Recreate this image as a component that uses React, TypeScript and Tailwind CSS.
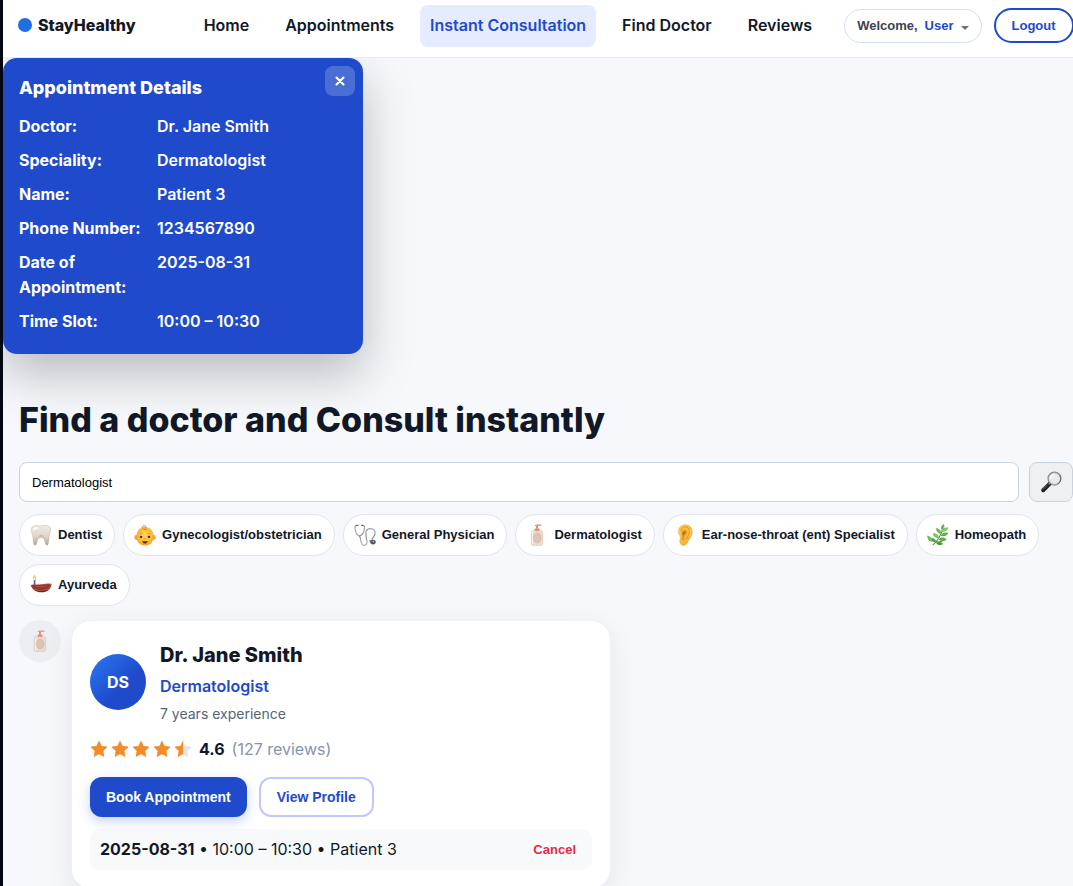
import React, { useState } from "react";

const controlFont = "font-['Liberation_Sans',Arial,sans-serif]";

function ToothIcon() {
  return (
    <svg viewBox="0 0 24 24" className="size-[22px]" aria-hidden="true">
      <defs>
        <linearGradient id="tooth" x1="0" y1="0" x2="0" y2="1">
          <stop offset="0" stopColor="#f1ebe1" />
          <stop offset="0.55" stopColor="#dfd6c9" />
          <stop offset="1" stopColor="#b3a18b" />
        </linearGradient>
      </defs>
      <path
        d="M2 3.600C3.400 1.500 6 1.800 7.600 1.700c1.600-.1 2.800.6 4.400.6s2.800-.7 4.400-.6c1.600.1 4.200-.2 5.600 1.900 1.200 2.300.3 5.300-.6 7.400-.8 1.900-.5 4.200-.9 7-.4 2.900-.7 5.200-1.900 5.200-1.400 0-2-2.200-2.500-4.600-.5-2.300-1.600-3.900-4.100-3.900s-3.600 1.600-4.100 3.900c-.5 2.400-1.100 4.600-2.500 4.600-1.200 0-1.500-2.300-1.900-5.200-.3-2.800-.1-5.100-.9-7C1.700 8.900.8 5.900 2 3.600z"
        fill="url(#tooth)"
        stroke="#b8ad9d"
        strokeWidth="0.500"
      />
      <path d="M8.300 15.800c.2-2.400 1.700-4 3.700-4s3.500 1.600 3.700 4c-.9-1.200-2.200-1.700-3.700-1.700s-2.800.5-3.700 1.700z" fill="#bfb09b" opacity="0.600" />
      <path d="M4.200 4.300c1.800-1.100 4-.6 5 .2-1.500.1-3.800.5-4.600 3.200-.8-.9-1-2.300-.4-3.400z" fill="#fffdf8" opacity="0.900" />
    </svg>
  );
}

function BabyIcon() {
  return (
    <svg viewBox="0 0 24 24" className="size-[22px]" aria-hidden="true">
      <defs>
        <radialGradient id="baby" cx="0.5" cy="0.45" r="0.6">
          <stop offset="0" stopColor="#ffd65c" />
          <stop offset="0.7" stopColor="#fbb935" />
          <stop offset="1" stopColor="#ed951c" />
        </radialGradient>
      </defs>
      <ellipse cx="2.700" cy="14.500" rx="2.300" ry="2.900" fill="#f3a42a" />
      <ellipse cx="21.300" cy="14.500" rx="2.300" ry="2.900" fill="#f3a42a" />
      <path d="M12 3.200c5.600 0 9.200 4.100 9.200 10.300 0 6.200-4.200 10-9.200 10s-9.200-3.800-9.200-10C2.800 7.300 6.400 3.200 12 3.200z" fill="url(#baby)" />
      <path d="M13.700 6c-2.700.6-5-.7-4.600-2.500.3-1.600 2.500-2.200 3.600-1 .8.900.3 2.100-.8 1.900" stroke="#cf8321" strokeWidth="1" fill="none" strokeLinecap="round" />
      <path d="M6.200 10.800c.7-.7 1.700-.9 2.700-.5M15.100 10.300c1-.4 2-.2 2.700.5" stroke="#d28a2a" strokeWidth="0.800" fill="none" strokeLinecap="round" />
      <circle cx="7.700" cy="14" r="1.300" fill="#34251b" />
      <circle cx="16.300" cy="14" r="1.300" fill="#34251b" />
      <path d="M11.200 16c.5.400 1.100.4 1.600 0" stroke="#d17a14" strokeWidth="0.800" fill="none" strokeLinecap="round" />
      <path d="M9 18.500c2 .5 4 .5 6 0-.4 2.100-1.600 2.900-3 2.900s-2.600-.8-3-2.900z" fill="#6d2719" />
    </svg>
  );
}

function StethoscopeIcon() {
  return (
    <svg viewBox="0 0 24 24" className="size-[22px]" aria-hidden="true" fill="none" strokeLinecap="round">
      <path d="M3.300 1.500C1.200 1.700.8 2.700 1.100 4.500c.5 3.500 1.400 7.500 4.400 8.500 3.200-.7 5.500-4.700 6-8.300.3-1.900-.3-3-2.300-3.200" stroke="#94979a" strokeWidth="1.300" />
      <path d="M1.500 4.500c.6 3.200 1.500 6.800 4.100 8 2.800-1 5-4.500 5.500-8" stroke="#eff0f1" strokeWidth="0.500" />
      <path d="M6 13c.8 1.400.9 2 1.200 4.200.5 3.200 1.500 6 3.800 6 2.500 0 3.200-2.300 3-5-.2-2.800-1.400-5.500-1-8.700.3-2.700 2.200-4.500 5-4.500 3.500 0 5.300 2.500 4.900 5.500-.3 2.600-2.500 4-3 6-.2 1 0 1.600.3 2.300" stroke="#909397" strokeWidth="1.300" />
      <path d="M7.300 17.200c.5 3 1.300 5.700 3.600 5.800 2.300 0 3-2.300 2.800-4.800M13.300 9.500c.4-2.300 2.200-4.100 4.700-4.100 3 0 4.800 2.300 4.500 4.900" stroke="#eceef0" strokeWidth="0.500" />
      <path d="M3 1.500h1.200M8.500 1.500h1" stroke="#65686c" strokeWidth="1.300" />
      <ellipse cx="20.700" cy="19.700" rx="3" ry="2.600" fill="#55585c" />
      <circle cx="21" cy="19" r="1" fill="#a5a8ad" />
      <path d="M17.500 18.500l1.800 1" stroke="#606367" strokeWidth="1.500" />
    </svg>
  );
}

function LotionIcon() {
  return (
    <svg viewBox="0 0 24 24" className="size-[22px]" aria-hidden="true">
      <rect x="5.700" y="7" width="12.600" height="16.500" rx="2.700" fill="#ecdccc" stroke="#d5bfae" strokeWidth="0.600" />
      <path d="M7.200 9v12.500" stroke="#fbf4ec" strokeWidth="1.100" strokeLinecap="round" />
      <ellipse cx="12.200" cy="15.200" rx="4.300" ry="5.600" fill="#dcc3b8" stroke="#cfb2a7" strokeWidth="0.500" />
      <rect x="9.400" y="4.800" width="5.300" height="2.600" rx="0.800" fill="#ee8068" />
      <path d="M12 5V2.200" stroke="#e9806a" strokeWidth="2" />
      <path d="M9.800 1.100c2-.7 5-.7 7-.2.500.2.400 1-.1 1.100-2 .3-5 .4-6.500.2-.6 0-.9-.9-.4-1.100z" fill="#f4917a" />
    </svg>
  );
}

function EarIcon() {
  return (
    <svg viewBox="0 0 24 24" className="size-[22px]" aria-hidden="true">
      <defs>
        <linearGradient id="ear" x1="0" y1="0" x2="1" y2="1">
          <stop offset="0" stopColor="#ffd04d" />
          <stop offset="1" stopColor="#f3a62b" />
        </linearGradient>
      </defs>
      <path d="M4.800 9.300C4.300 4.400 7.300 1.200 12 .9c4.800-.3 8.100 3.200 8 8.100-.1 3.700-2.200 5.900-3.600 8.300-1.300 2.300-2.400 5.900-5.500 6.100-3.200.2-4.900-2.500-4.600-5.200.2-1.700 1-2.500.7-4.200-.3-1.500-1.900-2.400-2.200-4.700z" fill="url(#ear)" stroke="#e6992c" strokeWidth="0.400" />
      <path d="M7.300 7.200C8 4.300 10 3 12.500 3.100c3.500.2 5.100 3.300 4.600 6.300-.5 2.800-2.500 4.300-3.500 6.500" fill="none" stroke="#dc901f" strokeWidth="1" strokeLinecap="round" />
      <path d="M8.500 8.700c.9-2.500 3.500-3.300 5-1.900 1.600 1.600.7 4.300-1.100 5.400-1.300.8-1.200 2-.8 3.300.4 1.700-1.100 2.900-2.600 2-1.500-1-.3-2.700-.3-4.300 0-1.700-1-2.900-.2-4.500z" fill="#e39a2b" />
      <path d="M9.800 8.900c.8-1.300 2.200-1.300 2.800-.4.500 1-.5 2.100-1.600 2.800-.9.600-.9 1.700-.8 2.700-1.200-1.600-1.300-3.500-.4-5.100z" fill="#b9701a" />
      <path d="M17.900 6.300c.9 3 .1 5.500-1.300 7.800" stroke="#ffe07a" strokeWidth="0.900" fill="none" strokeLinecap="round" />
    </svg>
  );
}

function HerbIcon() {
  return (
    <svg viewBox="0 0 24 24" className="size-[22px]" aria-hidden="true">
      <path d="M6.500 22.700C11 19 14.500 13.500 17.200 5.500M9.300 20c3.500 0 6-.4 8.500-2" stroke="#4d8d38" strokeWidth="1.100" fill="none" strokeLinecap="round" />
      <g fill="#5fb243">
        <path d="M16.300 6.900c-2-3.100-.8-5.400 2.100-6.700 1.200 2.600.6 5.200-2.100 6.700z" />
        <path d="M16.300 8.200c1-3.300 3.300-5 6.900-4.300-.7 3.200-3.200 5-6.900 4.300z" fill="#74c456" />
        <path d="M15.500 10.900c-3.700-.6-5.700-3-5.500-6.500 3.400.5 5.700 2.800 5.500 6.500z" />
        <path d="M14.900 12.600c1.900-3.200 4.700-4.200 8.300-2.700-1.700 3.200-4.900 4.300-8.300 2.700z" fill="#4fa138" />
        <path d="M13.400 15.600c-3.900.2-6.400-2-7.100-5.600 3.900-.2 6.700 1.900 7.100 5.600z" fill="#74c456" />
        <path d="M12.500 16.600c2.500-2.300 5.900-2.400 9 .2-2.700 2.500-6.200 2.400-9-.2z" />
        <path d="M10.200 19.500c-3.400.9-6.100-.8-6.800-4.100 3.400-.6 6.200 1 6.800 4.100z" fill="#4fa138" />
        <path d="M5.700 19.300C2.200 19.200.4 16.400.3 12.500c3.800.9 5.800 3.400 5.400 6.800z" fill="#67b84b" />
        <path d="M10 20.600c2.700-1.500 5.500-1 7.500 1.300-2.600 1.700-5.600 1.400-7.500-1.300z" fill="#469b34" />
      </g>
      <path d="M18.300 2.400l-1.300 3.900M21 5.400L17.500 7.300M11.800 6l3.300 3.700M20.900 10.500l-5 1.500M8.300 11.300l4.500 3.300M1.900 14l3.200 4.300" stroke="#b5df94" strokeWidth="0.500" />
    </svg>
  );
}

function LampIcon() {
  return (
    <svg viewBox="0 0 24 24" className="size-[22px]" aria-hidden="true">
      <defs>
        <linearGradient id="bowl" x1="0" y1="0" x2="0" y2="1">
          <stop offset="0" stopColor="#c4584a" />
          <stop offset="1" stopColor="#6e1e1c" />
        </linearGradient>
      </defs>
      <path d="M.5 12.300c3.200-1.300 7.200-.6 11.500-1 5.300-.5 8.600-1.300 11.500-.5-.3 5.400-4.300 9.200-11.200 9.200C6.500 20 2.800 17.300.5 12.300z" fill="url(#bowl)" />
      <path d="M2 12.500c3.200-.9 6.400-.2 10.200-.4 4.200-.2 7.700-1 10-.4-1.700 2.300-5.300 3.600-9.900 3.600-4.900 0-7.900-.6-10.300-2.800z" fill="#84302a" />
      <path d="M5 13.600c3.200-.7 9.500-.1 15.300-1.200-2.300 1.500-5.200 2.100-8 2.100-3.100 0-5.200 0-7.300-.9z" fill="#aa5045" />
      <path d="M3.700 16.500c4.500 2 12.500 1.700 17-.8" stroke="#d67b66" strokeWidth="0.600" fill="none" />
      <path d="M5 13V6.500" stroke="#4865a8" strokeWidth="1.800" />
      <path d="M4.900.8C6.500 2.900 7 4.500 6.400 6 5.800 7.200 4.100 7.200 3.500 6 3 4.500 3.500 2.900 4.900.8z" fill="#ffc14d" />
      <path d="M5 3.500c.8 1.100.9 1.900.5 2.700-.3.500-.9.500-1.200 0-.3-.8 0-1.600.7-2.700z" fill="#fff7b6" />
    </svg>
  );
}

function MagnifierIcon() {
  return (
    <svg viewBox="0 0 24 24" className="size-[22px]" aria-hidden="true">
      <path d="M11 13.500L3.500 21" stroke="#202326" strokeWidth="4.300" strokeLinecap="round" />
      <path d="M7.900 15.300l-4.500 4.500" stroke="#6e747a" strokeWidth="0.900" strokeLinecap="round" />
      <path d="M12.200 12L9.500 14.700" stroke="#777c82" strokeWidth="2" />
      <circle cx="15.800" cy="8.300" r="6.900" fill="#e8ebed" stroke="#85898e" strokeWidth="1.600" />
      <circle cx="15.800" cy="8.300" r="6" fill="none" stroke="#d9dde0" strokeWidth="0.700" />
      <path d="M11.700 7.500c.4-2 2-3.300 4-3.400" stroke="#fff" strokeWidth="1.300" fill="none" strokeLinecap="round" />
      <path d="M21.500 4.500a6.900 6.900 0 0 1-2.100 9.700" stroke="#595e63" strokeWidth="0.800" fill="none" />
    </svg>
  );
}

const STAR = "M12 1.500l3.200 6.900 7.500.9-5.500 5.200 1.400 7.500L12 18.400 5.400 22l1.400-7.500L1.300 9.300l7.500-.9z";

function Star({ half = false }: { half?: boolean }) {
  return (
    <svg viewBox="0 0 24 24" className="size-[18px]" aria-hidden="true">
      <defs>
        <linearGradient id="half-star">
          <stop offset="0.5" stopColor="#f28c2b" />
          <stop offset="0.5" stopColor="#e0e3e8" />
        </linearGradient>
      </defs>
      <path
        d={STAR}
        fill={half ? "url(#half-star)" : "#f28c2b"}
        stroke={half ? "url(#half-star)" : "#f28c2b"}
        strokeLinejoin="round"
      />
    </svg>
  );
}

const navItems = ["Home", "Appointments", "Instant Consultation", "Find Doctor", "Reviews"];

const specialities = [
  { name: "Dentist", Icon: ToothIcon },
  { name: "Gynecologist/obstetrician", Icon: BabyIcon },
  { name: "General Physician", Icon: StethoscopeIcon },
  { name: "Dermatologist", Icon: LotionIcon },
  { name: "Ear-nose-throat (ent) Specialist", Icon: EarIcon },
  { name: "Homeopath", Icon: HerbIcon },
  { name: "Ayurveda", Icon: LampIcon },
];

const details = [
  ["Doctor:", "Dr. Jane Smith"],
  ["Speciality:", "Dermatologist"],
  ["Name:", "Patient 3"],
  ["Phone Number:", "1234567890"],
  ["Date of Appointment:", "2025-08-31"],
  ["Time Slot:", "10:00 – 10:30"],
];

function Header() {
  return (
    <header className="relative z-10 flex h-[58px] items-start border-b border-[#e8ebf3] bg-white pl-[15px]">
      <a href="#" className="flex shrink-0 items-center gap-[6px] pt-3 leading-[26px] font-extrabold">
        <span className="size-[14px] rounded-full bg-[#1d6fe3]" />
        StayHealthy
      </a>
      <nav className="ml-[58px] flex shrink-0 gap-4 pt-[5px]">
        {navItems.map((item) => (
          <a
            key={item}
            href="#"
            className={`rounded-lg px-[10px] pt-[7px] pb-[9px] leading-[26px] font-semibold whitespace-nowrap ${
              item === "Instant Consultation" ? "bg-[#e5ecff] text-[#1e4acb]" : ""
            }`}
          >
            {item}
          </a>
        ))}
      </nav>
      <div className={`ml-[22px] flex shrink-0 items-center gap-3 pt-2 text-[13px] font-bold ${controlFont}`}>
        <button className="flex h-[34px] items-center gap-[7px] rounded-full border border-[#d5e0f2] bg-white px-3 text-[#3d4350]">
          <span>Welcome,</span>
          <span className="text-[#1e4acb]">User</span>
          <svg viewBox="0 0 8 4" className="mt-1 h-1 w-2" aria-hidden="true">
            <path d="M0 0h8L4 4z" fill="#6b7078" />
          </svg>
        </button>
        <button className="h-[35px] rounded-full border-2 border-[#1e4acb] bg-white px-4 text-[#1e4acb]">Logout</button>
      </div>
    </header>
  );
}

function AppointmentDetails({ onClose }: { onClose: () => void }) {
  return (
    <section className="relative w-[360px] rounded-[14px] bg-[#1e4acb] px-4 pt-4 pb-5 text-white shadow-[0_20px_50px_rgba(0,0,0,0.25)]">
      <button
        aria-label="Close"
        onClick={onClose}
        className="absolute top-2 right-2 flex size-[30px] items-center justify-center rounded-lg bg-white/20"
      >
        <svg viewBox="0 0 10 10" className="size-[10px]" aria-hidden="true">
          <path d="M1.500 1.500l7 7M8.500 1.500l-7 7" stroke="white" strokeWidth="2" strokeLinecap="round" />
        </svg>
      </button>
      <h2 className="mb-[13px] text-lg leading-[27px] font-extrabold">Appointment Details</h2>
      <dl className="flex flex-col gap-[9px] leading-[25px]">
        {details.map(([label, value]) => (
          <div key={label} className="grid grid-cols-[130px_1fr] gap-2">
            <dt className="font-bold">{label}</dt>
            <dd className="font-semibold">{value}</dd>
          </div>
        ))}
      </dl>
    </section>
  );
}

function DoctorCard() {
  return (
    <article className="w-[540px] rounded-[20px] border border-[#eef2f7] bg-white p-[18px] shadow-[0_8px_28px_rgba(15,23,42,0.08)]">
      <div className="flex items-center gap-[14px]">
        <div className="flex size-14 shrink-0 items-center justify-center rounded-full bg-linear-135 from-[#2b78f5] to-[#1e4acb] to-60% font-bold text-white">
          DS
        </div>
        <div>
          <h2 className="text-xl leading-8 font-extrabold">Dr. Jane Smith</h2>
          <p className="mt-[2px] leading-[26px] font-semibold text-[#1e4acb]">Dermatologist</p>
          <p className="mt-1 text-sm leading-[22px] text-[#566478]">7 years experience</p>
        </div>
      </div>
      <div className="mt-[11px] flex items-center gap-[7px] leading-[26px]">
        <div className="flex gap-[3px]" role="img" aria-label="4.6 out of 5">
          <Star />
          <Star />
          <Star />
          <Star />
          <Star half />
        </div>
        <span className="font-bold">4.6</span>
        <span className="text-[#8594ab]">(127 reviews)</span>
      </div>
      <div className={`mt-[15px] flex gap-3 text-sm font-bold ${controlFont}`}>
        <button className="h-10 rounded-xl bg-[#1e4acb] px-4 text-white shadow-[0_4px_12px_rgba(30,74,203,0.25)]">
          Book Appointment
        </button>
        <button className="h-10 rounded-xl border-2 border-[#bfcafa] bg-white px-4 text-[#1e4acb]">View Profile</button>
      </div>
      <div className="mt-3 flex items-center justify-between rounded-[10px] bg-[#f7f9fb] px-[10px] py-2 leading-[25px]">
        <p>
          <strong className="font-bold">2025-08-31</strong> • 10:00 – 10:30 • Patient 3
        </p>
        <button className={`px-[6px] text-[13px] font-bold text-[#e7294a] ${controlFont}`}>Cancel</button>
      </div>
    </article>
  );
}

export default function App() {
  const [query, setQuery] = useState("Dermatologist");
  const [open, setOpen] = useState(true);

  return (
    <div className="h-screen overflow-hidden border-l-[3px] border-[#030712] bg-[#f6f8fc] font-['Inter',sans-serif] text-base text-[#111827]">
      <Header />
      <div className="min-h-[296px]">{open && <AppointmentDetails onClose={() => setOpen(false)} />}</div>
      <main className="pt-11 pl-4">
        <h1 className="text-[34px] leading-[44px] font-extrabold">Find a doctor and Consult instantly</h1>
        <form className="mt-5 flex gap-[10px]" onSubmit={(e) => e.preventDefault()}>
          <input
            type="text"
            aria-label="Search speciality"
            value={query}
            onChange={(e) => setQuery(e.target.value)}
            className={`h-10 min-w-0 flex-1 rounded-lg border border-[#c8d3e0] bg-white px-3 text-[13px] text-black ${controlFont}`}
          />
          <button
            aria-label="Search"
            className="flex h-10 w-11 items-center justify-center rounded-lg border border-[#c8d3e0] bg-[#eff0f2]"
          >
            <MagnifierIcon />
          </button>
        </form>
        <div className="mt-3 flex flex-wrap gap-2">
          {specialities.map(({ name, Icon }) => (
            <button
              key={name}
              onClick={() => setQuery(name)}
              className={`flex h-[42px] items-center gap-[6px] rounded-full border border-[#e1e4ea] bg-white pr-3 pl-[10px] text-[13px] font-bold whitespace-nowrap ${controlFont}`}
            >
              <Icon />
              {name}
            </button>
          ))}
        </div>
        <div className="mt-[14px] flex items-start gap-[10px]">
          <div className="flex size-[42px] shrink-0 items-center justify-center rounded-full bg-[#ebeff3]">
            <LotionIcon />
          </div>
          <DoctorCard />
        </div>
      </main>
    </div>
  );
}
